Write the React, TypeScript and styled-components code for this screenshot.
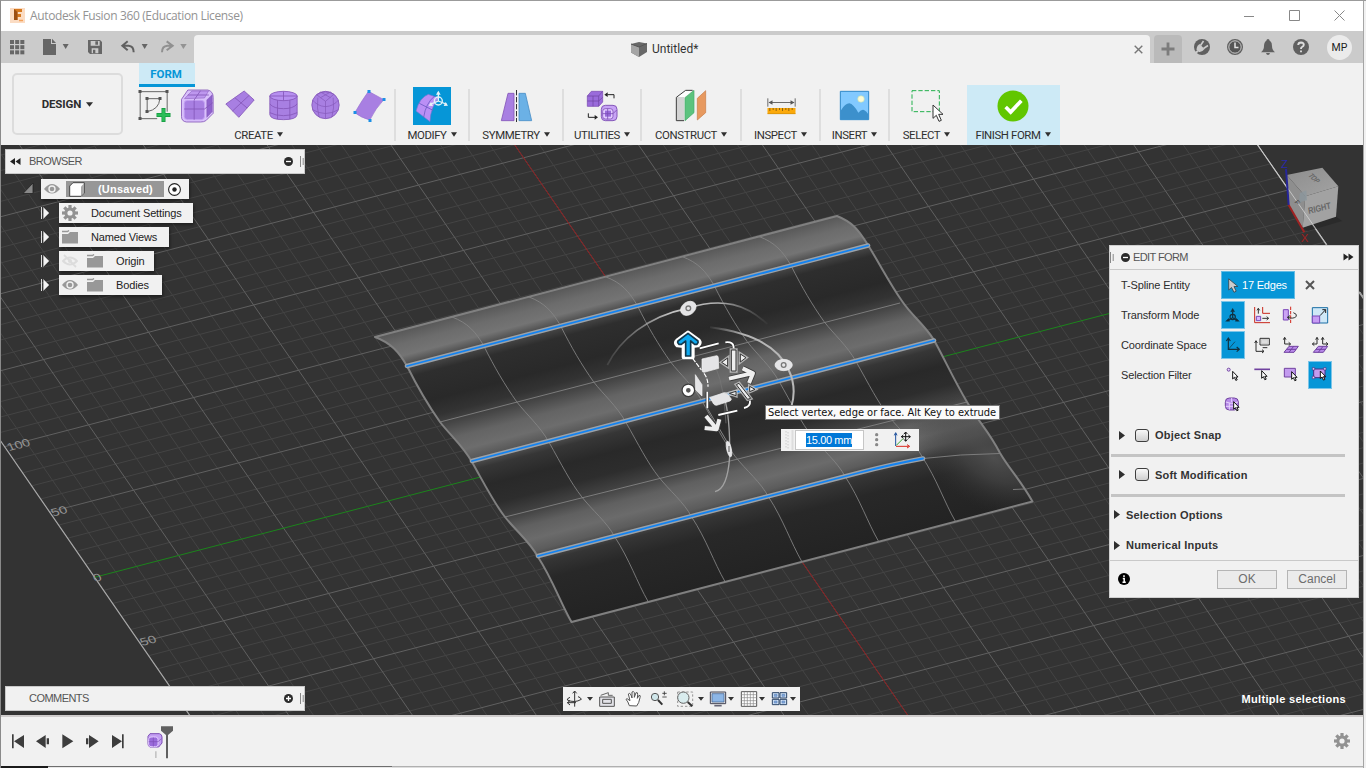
import React from "react";
import styled, { createGlobalStyle } from "styled-components";

const ui = `"Liberation Sans", Arial, sans-serif`;
const narrow = `Roboto, "Liberation Sans", sans-serif`;
const blue = "#0696d7";

const Global = createGlobalStyle`
  * { box-sizing: border-box; }
  body { margin: 0; overflow: hidden; background: #f1f1f1; font-family: ${ui}; font-size: 11px; color: #3c3c3c; }
  svg { display: block; flex: none; }
`;

/* ---------- window frame ---------- */
const Window = styled.div`
  width: 1366px; height: 768px; display: flex; flex-direction: column;
  border-top: 1px solid #9b9b9b; border-left: 1px solid #8a8a8a; background: #f1f1f1;
`;
const Frame = styled.div`
  display: flex; flex-direction: column; flex: 1; margin-right: 2px; border-right: 1px solid #a5a5a5;
`;
const TitleBar = styled.div`
  height: 30px; background: #fff; display: flex; align-items: center; padding: 0 18px 0 8px; gap: 4px;
  font: 12px "Open Sans", sans-serif; color: #939393; letter-spacing: -0.36px;
  span { flex: 1; padding-bottom: 1px; }
`;
const WindowButtons = styled.div`display: flex; gap: 34px; align-items: center; padding-bottom: 2px;`;
const TabBar = styled.div`
  height: 32px; background: #cbcbcb; display: flex; align-items: flex-end;
`;
const QuickTools = styled.div`width: 193px; height: 32px;`;
const DocumentTab = styled.div`
  width: 956px; height: 28px; background: #f1f1f1; border-radius: 4px 4px 0 0; display: flex; align-items: center;
  padding: 0 7px 0 437px; gap: 5px; font: 12px ${narrow}; color: #333; letter-spacing: 0;
  span { flex: 1; }
`;
const NewTab = styled.div`
  width: 28px; height: 28px; margin-left: 4px; background: #bababa; border-radius: 4px 4px 0 0;
  display: grid; place-items: center;
`;
const Account = styled.div`
  height: 32px; flex: 1; display: flex; align-items: center; padding-left: 11px; gap: 15px;
`;
const Avatar = styled.div`
  width: 25px; height: 25px; border-radius: 50%; background: #ebebeb; display: grid; place-items: center;
  font: 10.500px ${narrow}; color: #222; margin-left: 2px;
`;

/* ---------- ribbon ---------- */
const Ribbon = styled.div`height: 82px; display: flex; background: #f1f1f1;`;
const WorkspaceButton = styled.div`
  width: 111px; height: 62px; margin: 10px 0 0 11px; border: 2px solid #dcdcdc; border-radius: 5px;
  display: flex; align-items: center; justify-content: center; gap: 5px;
  font: 700 11.5px ${narrow}; letter-spacing: -0.1px; color: #2d2d2d;
`;
const RibbonMain = styled.div`display: flex; flex-direction: column;`;
const TabRow = styled.div`height: 24px; padding-left: 16px;`;
const FormTab = styled.div`
  width: 56px; height: 24px; background: #cdeaf6; border-bottom: 3px solid ${blue}; color: ${blue};
  font: 700 11.5px/22px ${narrow}; text-align: center; padding-right: 2px;
`;
const GroupRow = styled.div`display: flex; height: 58px;`;
const Group = styled.div<{ $w: number; $active?: boolean; $last?: boolean }>`
  width: ${(p) => p.$w}px; position: relative; display: flex; flex-direction: column; align-items: center;
  padding-right: ${(p) => (p.$last ? 4 : p.$active ? 1 : 2)}px;
  background: ${(p) => (p.$active ? "#cdeaf6" : "transparent")};
  ${(p) => p.$active && "margin-top: -2px; padding-top: 2px;"}
  &::after {
    content: ""; position: absolute; right: 0; top: 2px; width: 2px; height: 52px;
    background: ${(p) => (p.$last || p.$active ? "transparent" : "#dedede")};
  }
`;
const IconRow = styled.div<{ $shift?: number }>`
  display: flex; height: 38px; margin-left: ${(p) => p.$shift ?? 0}px;
`;
const GroupLabel = styled.div`
  display: flex; align-items: center; gap: 4px; height: 19px; font: 11.4px ${narrow};
  letter-spacing: -0.4px; color: #2f2f2f; white-space: nowrap;
`;

/* ---------- canvas ---------- */
const Viewport = styled.div`position: relative; height: 570px; background: #333; overflow: hidden;`;
const Scene = styled.svg`position: absolute; left: -1px; top: 0;`;
const DockHeader = styled.div<{ $top: number }>`
  position: absolute; left: 4px; top: ${(p) => p.$top}px; width: 300px; height: 25px; background: #f1f1f1;
  border: 1px solid #c9c9c9; display: flex; align-items: center; padding-bottom: 1px; color: #555;
  letter-spacing: -0.55px;
  span { flex: 1; }
`;
const Tree = styled.div`
  position: absolute; left: 20px; top: 34px; display: flex; flex-direction: column; gap: 4px; align-items: flex-start;
`;
const TreeRow = styled.div<{ $indent: number }>`
  display: flex; align-items: center; height: 20px; padding-left: ${(p) => p.$indent}px;
`;
const TreeItem = styled.div<{ $w: number }>`
  width: ${(p) => p.$w}px; height: 20px; background: #f1f1f1; display: flex; align-items: center;
  box-shadow: 1px 2px 3px rgba(0, 0, 0, 0.4); white-space: nowrap; letter-spacing: -0.14px; color: #222;
`;
const RootName = styled.div`
  width: 98px; height: 16px; background: #979797; color: #fff; font-weight: 700; display: flex; align-items: center;
  gap: 13px; padding-left: 3px; letter-spacing: 0.2px;
`;
const Twisty = styled.svg<{ $w: number }>`width: ${(p) => p.$w}px; height: 20px;`;

const EditPanel = styled.div`
  position: absolute; left: 1108px; top: 100px; width: 250px; height: 353px; background: #f1f1f1;
  border: 1px solid #cfcfcf; display: flex; flex-direction: column;
`;
const PanelHeader = styled.div`
  height: 24px; border-bottom: 1px solid #c9c9c9; display: flex; align-items: center; color: #555;
  padding: 0 4px 1px 0; letter-spacing: -0.6px;
  span { flex: 1; padding-left: 3px; }
`;
const OptionRow = styled.div`
  height: 30px; display: flex; align-items: center; padding-left: 11px;
`;
const OptionLabel = styled.div`width: 100px; letter-spacing: -0.14px; color: #2c2c2c; white-space: nowrap;`;
const OptionButtons = styled.div`display: flex; gap: 5px;`;
const OptionButton = styled.div<{ $on?: boolean }>`
  width: 24px; height: 28px; background: ${(p) => (p.$on ? blue : "transparent")};
  box-shadow: ${(p) => (p.$on ? "inset 0 0 0 1px #7cc5e8" : "none")};
`;
const EntityButton = styled.div`
  width: 74px; height: 28px; background: ${blue}; border: 1px solid #63bce4; color: #fff; display: flex;
  align-items: center; gap: 3px; padding-left: 6px; letter-spacing: -0.2px; white-space: nowrap;
`;
const Section = styled.div<{ $h: number; $pad: number; $lift?: number }>`
  height: ${(p) => p.$h}px; padding-left: ${(p) => p.$pad}px; padding-bottom: ${(p) => p.$lift ?? 0}px;
  display: flex; align-items: center; font-weight: 700; letter-spacing: 0.2px; color: #333;
`;
const Check = styled.div`
  width: 14px; height: 13px; border: 1px solid #3e3e3e; border-radius: 3px; margin: 0 6px 0 10px;
  background: linear-gradient(#f8f8f8, #cfcfcf);
`;
const Divider = styled.div`height: 3px; width: 234px; margin-left: 1px; background: #c4c4c4;`;
const PanelFooter = styled.div`
  flex: 1; border-top: 1px solid #c9c9c9; display: flex; align-items: center; padding: 0 11px 0 8px;
`;
const PanelButton = styled.div`
  width: 60px; height: 19px; border: 1px solid #b5b5b5; background: #ebebeb; color: #6d6d6d; display: grid;
  place-items: center; margin-left: 10px; font-size: 12px;
`;
const Tooltip = styled.div`
  position: absolute; left: 764px; top: 260px; width: 235px; height: 15px; background: #fafafa;
  border: 1px solid #777; color: #111; font: 11px/14px "DejaVu Sans Condensed", "Open Sans", sans-serif;
  padding-left: 2px; white-space: nowrap; letter-spacing: -0.02px;
`;
const ValueBox = styled.div`
  position: absolute; left: 780px; top: 284px; width: 138px; height: 22px; background: #f1f1f1; display: flex;
  align-items: center;
`;
const ValueInput = styled.div`
  width: 69px; height: 20px; margin-left: 1px; background: #fff; border: 1px solid #c6c6c6; display: grid;
  place-items: center end; padding-right: 11px;
  span { background: #0078d7; color: #fff; height: 14px; line-height: 15px; width: 46px; text-align: center;
    font-size: 11px; white-space: nowrap; letter-spacing: -0.38px; }
`;
const NavBar = styled.div`position: absolute; left: 562px; top: 542px; background: #f1f1f1;`;
const Status = styled.div`
  position: absolute; right: 17px; top: 547px; color: #fff; font-weight: 700; letter-spacing: 0.32px; line-height: 14px;
`;

/* ---------- timeline ---------- */
const Timeline = styled.div`
  height: 51px; background: #f1f1f1; border-top: 2px solid #cfcccc; display: flex; align-items: center;
  justify-content: space-between; padding: 0 13px 2px 0;
`;
const BottomEdge = styled.div`
  height: 2px; display: flex;
  i { height: 2px; background: #1b1b1b; width: 47px; }
  u { height: 2px; background: #e8e8e8; border-top: 1px solid #6e6e6e; width: 344px; }
  b { height: 2px; background: #dedede; border-top: 1px solid #b0b0b0; flex: 1; }
`;

const Down = ({ c = "#2f2f2f", w = 7 }: { c?: string; w?: number }) => (
  <svg width={w} height="5" viewBox="0 0 7 5" preserveAspectRatio="none"><path d="M0 .3h7L3.5 4.7z" fill={c} /></svg>
);

const Cell = ({ x, y, w, h, children }: { x: number; y: number; w: number; h: number; children: React.ReactNode }) => (
  <svg width={w} height={h} viewBox={`${x} ${y} ${w * 3} ${h * 3}`}>{children}</svg>
);

const Cursor = ({ x, y, s = 1, fill = "#fff" }: { x: number; y: number; s?: number; fill?: string }) => (
  <path transform={`translate(${x} ${y}) scale(${s})`} d="M0 0V27L6 21L11 32L16 30L11 20H19Z" fill={fill} stroke="#111" strokeWidth="3.500" strokeLinejoin="miter" />
);

/* ---------- 3D scene ---------- */
const O = [703.6, 419];
const U = [105, -27.3];
const V = [45, 65.3];
const pt = (a: number, b: number) => [O[0] + a * U[0] + b * V[0], O[1] + a * U[1] + b * V[1]];
const seg = (a: number[], b: number[]) => `M${a[0].toFixed(1)} ${a[1].toFixed(1)}L${b[0].toFixed(1)} ${b[1].toFixed(1)}`;

function gridPaths() {
  let minor = "";
  let major = "";
  for (let i = -29; i <= 30; i++) {
    const s = seg(pt(i / 5, -7), pt(i / 5, 8));
    if (i % 5) minor += s;
    else major += s;
  }
  for (let j = -35; j <= 40; j++) {
    const s = seg(pt(-5.8, j / 5), pt(6, j / 5));
    if (j % 5) minor += s;
    else if (j) major += s;
  }
  return { minor, major };
}

const profile =
  "M375 337C391 343 399 352 407 366C418 388 428 405 440 422C450 435 463 446 472 462C485 485 494 503 505 517C516 531 530 542 538 557C553 580 560 602 571.5 622";
const outline =
  "M375 337C391 343 399 352 407 366C418 388 428 405 440 422C450 435 463 446 472 462C485 485 494 503 505 517C516 531 530 542 538 557C553 580 560 602 571.5 622L1032.5 501.5C1019 478 1010 470 1000 453C988 430 980 424 967 402C953 378 946 362 934 340C924 324 912 316 902 301C890 284 882 268 868 245C858 229 852 222 837 216Z";

const shades: [number, string][] = [
  [421, "#585858"], [434, "#6c6c6c"], [446, "#747474"], [456, "#4c4c4c"], [468, "#2e2e2e"], [496, "#292929"],
  [512, "#333"], [524, "#484848"], [538, "#646464"], [552, "#6d6d6d"], [563, "#585858"], [574, "#363636"],
  [592, "#292929"], [612, "#2d2d2d"], [628, "#424242"], [642, "#606060"], [656, "#6b6b6b"], [668, "#5c5c5c"],
  [680, "#353535"], [698, "#282828"], [746, "#232323"],
];

function SceneView() {
  const { minor, major } = gridPaths();
  const selected = ["M407 366L868 245.5", "M472 461L934 340.5", "M538 556L860 472.5Q893 464 923 458.5"];
  return (
    <Scene width="1366" height="570" viewBox="0 145 1366 570">
      <defs>
        <linearGradient id="wave" gradientUnits="userSpaceOnUse" x1="106.5" y1="407.3" x2="188.7" y2="721.8">
          {shades.map(([d, c]) => <stop key={d} offset={(d - 421) / 325} stopColor={c} />)}
        </linearGradient>
        <radialGradient id="corner" gradientUnits="userSpaceOnUse" cx="0" cy="0" r="1" gradientTransform="translate(994 458) rotate(28) scale(90 52)">
          <stop offset="0" stopColor="#525252" stopOpacity=".9" /><stop offset=".4" stopColor="#484848" stopOpacity=".65" />
          <stop offset="1" stopColor="#303030" stopOpacity="0" />
        </radialGradient>
        <clipPath id="body"><path d={outline} /></clipPath>
        <linearGradient id="arcA" x1="0" x2="1"><stop offset="0" stopColor="#999" stopOpacity=".2" /><stop offset=".4" stopColor="#c4c4c4" /><stop offset=".7" stopColor="#b0b0b0" /><stop offset="1" stopColor="#777" stopOpacity=".1" /></linearGradient>
        <linearGradient id="arcB" x1="0" x2="1"><stop offset="0" stopColor="#999" stopOpacity=".1" /><stop offset=".4" stopColor="#b4b4b4" /><stop offset="1" stopColor="#b8b8b8" /></linearGradient>
        <linearGradient id="cubeTop" x1="0" y1="0" x2="1" y2="1"><stop offset="0" stopColor="#8d8d8d" /><stop offset="1" stopColor="#a3a3a3" /></linearGradient>
      </defs>
      <path d={minor} stroke="#444" fill="none" />
      <path d={major} stroke="#606060" fill="none" />
      <path d={seg(pt(-5.8, -7), pt(-5.8, 8)) + seg(pt(6, -7), pt(6, 8))} stroke="#a8a8a8" strokeWidth="1.200" fill="none" />
      <path d={seg(pt(0, -7), pt(0, 8))} stroke="#8e1a1c" fill="none" />
      <path d={seg(pt(-5.8, 0), pt(6, 0))} stroke="#1c841c" fill="none" />
      <g fill="#939393" fontFamily="Liberation Sans, sans-serif" fontSize="11">
        <text transform="translate(9 451) rotate(-14) skewX(12)" textLength="23" lengthAdjust="spacingAndGlyphs">100</text>
        <text transform="translate(53 516.500) rotate(-14) skewX(12)" textLength="16" lengthAdjust="spacingAndGlyphs">50</text>
        <text transform="translate(95 582) rotate(-14) skewX(12)" textLength="8" lengthAdjust="spacingAndGlyphs">0</text>
        <text transform="translate(142 646) rotate(-14) skewX(12)" textLength="16" lengthAdjust="spacingAndGlyphs">50</text>
      </g>

      <path d={outline} fill="url(#wave)" />
      <g clipPath="url(#body)">
        <rect x="880" y="380" width="160" height="140" fill="url(#corner)" />
        <g fill="none" stroke="#868686" strokeWidth="1" strokeOpacity=".85">
          {[1, 2, 3, 4, 5].map((k) => <path key={k} d={profile} transform={`translate(${k * 76.8} ${k * -20.1})`} />)}
          <path d="M440 422L900 303M505 517L967 402M923 458.5Q960 454 1000 453.5M1013 489.500L1024 489" />
        </g>
      </g>
      <path d={outline} fill="none" stroke="#808080" strokeWidth="2" strokeLinejoin="round" />
      {selected.map((d) => (
        <g key={d} fill="none" strokeLinecap="round">
          <path d={d} stroke="#9aa2aa" strokeWidth="4.600" />
          <path d={d} stroke="#1283f2" strokeWidth="1.800" />
        </g>
      ))}

      {/* transform manipulator */}
      <g transform="translate(600 290) scale(.33333)" fill="none">
        <path d="M22 225C60 150 140 80 262 55C370 20 440 45 502 102" stroke="url(#arcA)" strokeWidth="5" />
        <path d="M330 112C470 130 540 180 566 240C590 290 580 330 574 350" stroke="url(#arcB)" strokeWidth="6" />
        <path d="M372 320C388 370 390 430 389 500C385 560 370 600 345 605" stroke="#a2a2a2" strokeWidth="4" />
        <path d="M350 240Q372 290 378 400" stroke="#777" strokeWidth="2" />
        <g stroke="#2d2d2d" strokeWidth="10"><path d="M299 175L356 160M376 157Q402 154 401 175M322 305V355M355 375L412 362M432 354Q452 350 450 332" /></g>
        <g stroke="#fff" strokeWidth="5.500"><path d="M299 175L356 160M376 157Q402 154 401 175M322 305V355M355 375L412 362M432 354Q452 350 450 332" /></g>
        <path d="M278 205L304 240M312 250Q324 265 324 290" stroke="#fff" strokeWidth="3.500" strokeDasharray="14 4" />
        <path d="M322 355L384 460" stroke="#888" strokeWidth="3" />
        <g fill="#e4e4e6" stroke="#f6f6f6" strokeWidth="2">
          <ellipse cx="265" cy="55" rx="25" ry="19" transform="rotate(-35 265 55)" />
          <ellipse cx="551" cy="225" rx="26" ry="17" />
          <ellipse cx="387" cy="477" rx="7" ry="24" transform="rotate(-12 387 477)" />
          <path d="M306 207L350 197Q355 197 355 204L356 235L312 247Q306 247 306 240ZM286 254L306 284V318L287 300ZM330 323L372 308Q378 308 382 312L394 327Q394 331 390 333L350 346Q344 346 341 342Z" />
        </g>
        <g stroke="#777" strokeWidth="4"><circle cx="265" cy="55" r="7" /><circle cx="551" cy="225" r="7" /><path d="M387 468V486" /></g>
        <circle cx="265" cy="301" r="13" stroke="#3a3a3a" strokeWidth="15" /><circle cx="265" cy="301" r="12" stroke="#fff" strokeWidth="10" fill="#555" />
        <g strokeLinejoin="round">
          <path d="M387 266L452 251M428 235L459 250L447 279M318 378L346 412M358 388L350 418L314 414" stroke="#3a3a3a" strokeWidth="17" />
          <path d="M387 266L452 251M428 235L459 250L447 279M318 378L346 412M358 388L350 418L314 414" stroke="#eee" strokeWidth="12" />
        </g>
        <g fill="none" stroke="#d0d0d0" strokeWidth="10" opacity=".75">
          <path d="M394 180H408V243H394ZM383 204V229L365 217ZM421 192L438 203L421 216Z" />
          <path d="M409 284L417 280L452 325L443 328ZM408 304V317L388 310ZM449 289L465 298L449 305Z" />
        </g>
        <g fill="#eee" stroke="#333" strokeWidth="3">
          <path d="M394 180H408V243H394ZM383 204V229L365 217ZM421 192L438 203L421 216Z" />
          <path d="M409 284L417 280L452 325L443 328ZM408 304V317L388 310ZM449 289L465 298L449 305Z" />
        </g>
        <path d="M264 128L297 152Q302 158 294 166L284 167L278 160V202H251V160L244 167L232 166Q224 158 231 152Z" fill="#fff" stroke="#fff" strokeWidth="12" strokeLinejoin="round" />
        <path d="M264 130L294 153Q296 157 291 163H284L272 153V198H257V153L244 163H237Q231 158 234 153Z" fill="#0fa9ef" stroke="#12384c" strokeWidth="5" strokeLinejoin="round" />
      </g>

      {/* view cube */}
      <g transform="translate(1105 145) scale(.33333)" fontFamily="Liberation Sans, sans-serif">
        <path d="M590 248L693 215L712 228L610 258Z" fill="#222" opacity=".5" />
        <path d="M545 90L652 68L700 124L601 154Z" fill="url(#cubeTop)" />
        <path d="M545 90L601 154L593 248L552 182Z" fill="#8e8e8e" />
        <path d="M601 154L700 124L693 215L593 248Z" fill="#a2a2a2" />
        <path d="M584 145L604 136L606 166L583 172Z" fill="#8c979d" opacity=".8" />
        <path d="M458 0L665 298" stroke="#d8d8d8" strokeWidth="3" opacity=".75" />
        <path d="M551 180L543 72" stroke="#25259a" strokeWidth="6" />
        <path d="M551 180L598 262" stroke="#a02222" strokeWidth="6" />
        <text x="528" y="70" fontSize="34" fill="#2a2aa8">Z</text>
        <text x="587" y="290" fontSize="34" fill="#a02222">X</text>
        <text transform="translate(611 207) rotate(-14) skewX(-4)" fontSize="27" fontWeight="700" textLength="70" lengthAdjust="spacingAndGlyphs" fill="#676767">RIGHT</text>
        <text transform="translate(608 92) rotate(42) skewX(-20)" fontSize="22" fontWeight="700" textLength="34" lengthAdjust="spacingAndGlyphs" fill="#666">TOP</text>
        <text transform="translate(568 172) rotate(50)" fontSize="20" fontWeight="700" fill="#555">F</text>
      </g>
      <path d="M1360 292L1364 298" stroke="#aaa" />
    </Scene>
  );
}

/* ---------- small drawings ---------- */
const purple = "#a87fe2";
const edge = "#8457b8";

const Minus = ({ plus = false }: { plus?: boolean }) => (
  <svg width="9" height="9" viewBox="0 0 9 9"><circle cx="4.5" cy="4.500" r="4.500" fill="#2b2b2b" /><path d={plus ? "M2 4.500H7M4.500 2V7" : "M2 4.500H7"} stroke="#fff" strokeWidth="1.300" /></svg>
);
const Grip = () => <svg width="4" height="13" viewBox="0 0 4 13"><path d="M.5 1V12M3.200 3V10" stroke="#888" /></svg>;
const Eye = () => (
  <svg width="16" height="12" viewBox="0 0 16 12"><path d="M0 6Q8-4 16 6Q8 15 0 6Z" fill="#999" /><circle cx="8" cy="6" r="3.700" fill="#f1f1f1" /><circle cx="8" cy="6" r="2.300" fill="#999" /></svg>
);
const EyeOff = () => (
  <svg width="16" height="14" viewBox="0 0 16 14"><path d="M1 7Q8 0 15 7Q8 14 1 7ZM2 1L14 13" fill="none" stroke="#dcdcdc" strokeWidth="1.800" /><circle cx="8" cy="7" r="2" fill="#dcdcdc" /></svg>
);
const Folder = () => (
  <svg width="16" height="14" viewBox="0 0 16 14"><path d="M0 4H6L8 2H16V13.500H0Z" fill="#989898" /><path d="M0 1.500H5.500L7 .5" stroke="#989898" strokeWidth="1.500" fill="none" /></svg>
);
const Gear = ({ s = 16 }: { s?: number }) => (
  <svg width={s} height={s} viewBox="-8 -8 16 16">
    <g fill="#929292">{[0, 45, 90, 135].map((a) => <rect key={a} x="-1.600" y="-8" width="3.200" height="16" transform={`rotate(${a})`} />)}<circle r="5.600" /></g>
    <circle r="2.600" fill="#f1f1f1" />
  </svg>
);
const Expand = () => (
  <Twisty $w={14} viewBox="0 0 14 20"><path d="M2.500 4V16" stroke="#ddd" /><path d="M4.500 4.500L10 10L4.500 15.500Z" fill="#f4f4f4" stroke="#bbb" strokeWidth=".6" /></Twisty>
);
const Tri = () => <svg width="6" height="9" viewBox="0 0 6 9"><path d="M0 0L6 4.500L0 9Z" fill="#2f2f2f" /></svg>;

function QuickIcons() {
  return (
    <svg width="193" height="32" viewBox="3 93 579 96" fill="#666">
      {[0, 1, 2].map((r) => [0, 1, 2].map((c) => <rect key={`${r}${c}`} x={30 + c * 15.500} y={120 + r * 15.500} width="12" height="12" />))}
      <path d="M129 117H153V132H168V165H129ZM156 116L168 129H156ZM188 132H206L197 147Z" />
      <path d="M264 120H300L306 126V162H270L264 156Z" /><path d="M272 123H299V137H272ZM275 145H295V160H275Z" fill="#cbcbcb" /><path d="M286 124H294V134H286ZM279 149H286V160H279Z" />
      <path d="M383 124L367 137L383 151M369 137H386Q401 138 401 157" fill="none" stroke="#606060" strokeWidth="6" /><path d="M425 132H443L434 147Z" />
      <g opacity=".55"><path d="M500 124L518 137L500 151M516 137H502Q486 138 486 157" fill="none" stroke="#606060" strokeWidth="6" /><path d="M541 132H560L550 147Z" /></g>
    </svg>
  );
}

const optionIcons: React.ReactNode[][] = [
  [
    <g key="a" stroke="#12303f" strokeWidth="3.500" fill="none"><path d="M383 500V518L367 527M383 518L399 527" /><circle cx="383" cy="516" r="8" /><path d="M383 490L389 500H377ZM362 529L371 520L374 529ZM403 529L394 520L391 529Z" fill="#12303f" strokeWidth="1" /></g>,
    <g key="b" fill="none" strokeWidth="3"><path d="M449 486V533H495M473 486V505M473 505H495" stroke="#c9281d" /><path d="M460 506V490M456 496L460 490L464 496M472 520H490M485 515L491 520L485 525" stroke="#333" /><path d="M454 514H467V527H454Z" fill="#d9b6ff" stroke="#7a46b8" /></g>,
    <g key="c" fill="none" strokeWidth="3"><path d="M535 494H550V525H535Z" fill="#cba4f5" stroke="#7a46b8" /><path d="M557 485V534" stroke="#d2261c" strokeDasharray="10 3" /><path d="M565 503Q577 507 574 514Q566 523 548 517M555 512L547 517L554 523" stroke="#333" /></g>,
    <g key="d" fill="none" strokeWidth="3"><path d="M622 488H668V534H622Z" fill="#cfe8f7" stroke="#1b6fa5" /><path d="M622 513H644V534H622Z" fill="#c79cf5" stroke="#7a46b8" /><path d="M645 512L662 494M652 494H662V504" stroke="#222" /></g>,
  ],
  [
    <g key="a" fill="none" stroke="#12303f" strokeWidth="3.500"><path d="M370 580V613H402M364 588L370 579L376 588M395 606L403 613L395 620" /><path d="M371 612L390 590" strokeWidth="2" /></g>,
    <g key="b" fill="none" stroke="#2d2d2d" strokeWidth="3"><path d="M465 580H493V600H465ZM473 608H487" /><path d="M469 584H489V596H469Z" stroke="#ccc" fill="#ddd" /><path d="M453 588V619H476M449 594L453 587L457 594M471 614L477 619L471 624" /></g>,
    <g key="c" fill="none" stroke="#2d2d2d" strokeWidth="3"><path d="M539 578V597H556M535 584L539 577L543 584M551 592L557 597L551 602" /><path d="M552 604H580L567 622H537ZM545 613H573M566 604L552 622" fill="#b98aea" stroke="#70429f" /></g>,
    <g key="d" fill="none" stroke="#2d2d2d" strokeWidth="3"><path d="M636 578V597H622M632 584L636 577L640 584M628 592L622 597L628 602M653 578V597H668M649 584L653 577L657 584M663 592L669 597L663 602" /><path d="M640 604H668L655 622H625ZM633 613H661M654 604L640 622" fill="#b98aea" stroke="#70429f" /></g>,
  ],
  [
    <g key="a"><circle cx="371" cy="674" r="4.500" fill="#e9d5ff" stroke="#70429f" strokeWidth="3" /><Cursor x={383} y={679} s={0.85} /></g>,
    <g key="b"><path d="M448 673H495" stroke="#70429f" strokeWidth="5" /><Cursor x={470} y={677} s={0.85} /></g>,
    <g key="c"><path d="M538 670H571V696H538Z" fill="#c39bef" stroke="#70429f" strokeWidth="3" /><Cursor x={560} y={680} s={0.85} /></g>,
    <g key="d"><path d="M626 672H660V698H626Z" fill="#c39bef" stroke="#4b2f80" strokeWidth="3" /><path d="M622 668H629V675H622ZM656 668H663V675H656ZM622 694H629V701H622Z" fill="#e9d5ff" stroke="#4b2f80" strokeWidth="2" /><Cursor x={646} y={678} s={0.85} /></g>,
  ],
];

const RoundCube = () => (
  <g stroke={edge} strokeWidth="2.500">
    <path d="M562 270H622Q638 274 638 292V340L616 362Q610 366 600 366H558Q543 364 543 350V298Z" fill="#d9c1fb" />
    <path d="M552 296L574 273H624L612 294Z" fill="#bd97ee" strokeWidth="1.500" /><path d="M619 300L635 284V335L619 352Z" fill="#8f62cc" strokeWidth="1.500" />
    <rect x="551" y="301" width="61" height="58" rx="10" fill={purple} stroke="#c7a5f5" /><path d="M551 327H612L637 308M581 301V359M581 300L600 272M562 285H625" fill="none" />
  </g>
);

const labels = [
  { name: "MODIFY", w: 74, x: 72, y: 81, icon: (
    <g><path d="M72 81H186V195H72Z" fill={blue} /><path d="M81 153Q92 112 118 103L150 114Q125 140 123 185Z" fill="#bb8ff5" stroke="#6a78cf" strokeWidth="2" /><path d="M91 130L132 151M104 172Q110 130 137 108" stroke="#6d5cc4" strokeWidth="2.500" fill="none" />
      <g fill="none" stroke="#dff0f8" strokeWidth="4"><circle cx="148" cy="123" r="12" /><path d="M148 97V123L123 133M148 123L173 133" /></g><path d="M148 92L155 104H141ZM119 137L126 126L132 138ZM177 137L170 126L164 138Z" fill="#e7f2f7" /></g>) },
  { name: "SYMMETRY", w: 94, x: 321, y: 81, icon: (
    <g><path d="M354 100H372V182H334Z" fill={purple} stroke={edge} strokeWidth="2.500" /><path d="M387 100H406L425 182H387Z" fill="#6bb1e6" stroke="#4a8fc8" strokeWidth="2.500" /><path d="M379.500 90V186" stroke="#333" strokeWidth="3" strokeDasharray="16 5" /></g>) },
  { name: "UTILITIES", w: 78, x: 582, y: 81, icon: (
    <g><path d="M595 108L607 94H641V126L629 139H595Z" fill="#9a6bdb" stroke={edge} strokeWidth="2.500" /><path d="M595 108H629V139M629 108L641 94M612 108V139M595 123H629L641 112" stroke="#6d429f" strokeWidth="2" fill="none" />
      <rect x="637" y="136" width="47" height="46" rx="12" fill="#c7a3f5" stroke={edge} strokeWidth="3" /><rect x="641" y="146" width="31" height="31" rx="8" fill="#e2cbff" stroke={edge} strokeWidth="2.500" /><path d="M648 152H666V170H648Z" fill="#9a6bdb" /><path d="M656 146V178M641 161H672L683 150" stroke="#7d4fb5" strokeWidth="2.500" fill="none" />
      <path d="M675 115V104H655M598 160V172H618" stroke="#222" strokeWidth="3" fill="none" /><path d="M646 104L656 97V111ZM627 172L617 165V179Z" fill="#222" /></g>) },
  { name: "CONSTRUCT", w: 100, x: 849, y: 81, icon: (
    <g><path d="M863 110L890 91H912L886 112V182H863Z" fill="#fff" /><path d="M863 111H886V182H863Z" fill="#d4d4d4" /><path d="M885 182H862V112L890 91H911" stroke="#3c3c3c" strokeWidth="3" fill="none" /><path d="M888 113L915 91V158L888 182Z" fill="#5cc37e" stroke="#45ac69" strokeWidth="2" /><path d="M925 115L950 92V158L925 180Z" fill="#e7995f" stroke="#c87a44" strokeWidth="2" /></g>) },
  { name: "INSPECT", w: 79, x: 64.5, y: 81, icon: (
    <g><path d="M82 115V140M164 115V140M87 127.500H160" stroke="#6a6a6a" strokeWidth="3" /><path d="M84 127.500L96 121V134ZM162 127.500L150 121V134Z" fill="#555" /><path d="M81 144H165V162H81Z" fill="#fba90a" /><path d="M88 144V153M98 144V150M107 144V153M117 144V150M126 144V153M136 144V150M145 144V153M155 144V150" stroke="#7a560f" strokeWidth="2.500" /><path d="M81 161H165" stroke="#cf8c0c" strokeWidth="2" /></g>) },
  { name: "INSERT", w: 69, x: 288, y: 81, icon: (
    <g><path d="M301 94H386V179H301Z" fill="#82c9ff" stroke="#2f88c9" strokeWidth="3" /><circle cx="363" cy="117" r="10" fill="#fdfbd5" stroke="#b9dcb8" strokeWidth="2" /><path d="M302 152Q316 130 328 130Q340 132 355 158Q365 147 372 150Q380 154 385 163V178H302Z" fill="#3c90cc" /></g>) },
  { name: "SELECT", w: 77, x: 502, y: 81, icon: (
    <g><path d="M514 92H596V155H514Z" fill="none" stroke="#23b04d" strokeWidth="3" strokeDasharray="13 6" /><path d="M577 135V175L587 166L595 184L602 181L594 163H607Z" fill="#fff" stroke="#333" strokeWidth="3" /></g>) },
  { name: "FINISH FORM", w: 93, x: 762, y: 81, icon: (
    <g><circle cx="819" cy="138" r="46.500" fill="#61c600" /><path d="M797 141L812 156L844 122" stroke="#fff" strokeWidth="11" fill="none" /></g>) },
];

const createIcons = [
  <g key="0" fill="none" stroke="#666" strokeWidth="3"><path d="M500 335V275H419V356H470M440 296H478M440 296V335M478 296Q476 328 440 335" /><path d="M414 270H423V279H414ZM495 270H504V279H495ZM414 351H423V360H414ZM435 291H444V300H435ZM474 291H483V300H474ZM435 330H444V339H435Z" fill="#555" stroke="none" /><path d="M489 324V366M468 345H510" stroke="#149a40" strokeWidth="12" /><path d="M489 326V364M470 345H508" stroke="#2bbd58" strokeWidth="8" /></g>,
  <RoundCube key="1" />,
  <g key="2" fill={purple} stroke={edge} strokeWidth="2.500"><path d="M676 312L731 273L761 300L715 352Z" /><path d="M703 293L740 324M696 333L746 286" /></g>,
  <g key="3" fill={purple} stroke={edge} strokeWidth="2.500"><path d="M808 288V344Q810 359 849 359Q888 359 890 344V288Z" /><ellipse cx="849" cy="288" rx="41" ry="14" fill="#b68ff0" /><path d="M808 312Q820 326 849 326Q878 326 890 312M808 338Q825 347 849 347Q873 347 890 338M831 301V357M868 301V357M849 274V302M808 288H890" fill="none" /></g>,
  <g key="4" fill={purple} stroke={edge} strokeWidth="2.500"><circle cx="975" cy="315" r="41" /><path d="M975 304L1000 283M975 304L948 284M975 304V356M948 284Q975 268 1000 283M936 300Q950 318 975 320Q1000 318 1014 300M936 329Q975 352 1014 329M952 293Q948 325 956 352M998 293Q1002 325 994 352M960 276L990 293M990 276L960 293" fill="none" strokeWidth="2" /></g>,
  <g key="5"><path d="M1104 274L1150 299Q1125 325 1108 360Q1080 352 1063 338Q1085 300 1104 274Z" fill={purple} stroke="#9a72d2" strokeWidth="2" /><path d="M1101 270H1110V279H1101ZM1146 294H1155V303H1146ZM1059 333H1068V342H1059ZM1104 357H1113V366H1104Z" fill="#1b8fe6" /></g>,
];

export default function App() {
  return (
    <>
      <Global />
      <Window>
        <Frame>
          <TitleBar>
            <svg width="17" height="17" viewBox="0 0 17 17"><rect x="1" y="0" width="15" height="15" fill="#fbdcc3" /><path d="M5 1H13V4H8.500V6H12V9H8.500V12H5Z" fill="#d6791f" /><path d="M5 1L8.500 4V12H5Z" fill="#9b4e12" /><path d="M10 12.500H14" stroke="#f4a259" strokeWidth="1.500" /></svg>
            <span>Autodesk Fusion 360 (Education License)</span>
            <WindowButtons>
              <svg width="11" height="11"><path d="M0 6.500H10" stroke="#888" /></svg>
              <svg width="11" height="11"><path d="M.5 .5H10.500V10.500H.5Z" stroke="#888" fill="none" /></svg>
              <svg width="11" height="11"><path d="M.5 .5L10.500 10.500M10.500 .5L.5 10.500" stroke="#888" /></svg>
            </WindowButtons>
          </TitleBar>
          <TabBar>
            <QuickTools><QuickIcons /></QuickTools>
            <DocumentTab>
              <svg width="16" height="15" viewBox="0 0 16 15"><path d="M0 2L8 0L16 1.500V10L8 15L0 10.500Z" fill="#686868" /><path d="M0 2L8 5V15L0 10.500Z" fill="#a5a5a5" /><path d="M0 2L8 5L16 1.500" stroke="#555" fill="none" /></svg>
              <span>Untitled*</span>
              <svg width="9" height="9"><path d="M.7 .7L8.300 8.300M8.300 .7L.7 8.300" stroke="#777" strokeWidth="1.400" /></svg>
            </DocumentTab>
            <NewTab><svg width="14" height="14"><path d="M7 .5V13.500M.5 7H13.500" stroke="#7c7c7c" strokeWidth="2.800" /></svg></NewTab>
            <Account>
              <svg width="18" height="18" viewBox="0 0 18 18"><circle cx="9" cy="9" r="8" fill="#606060" /><path d="M3.500 12Q3.500 8 6.500 6L11.500 11Q9 14.500 6 14Z" fill="#cbcbcb" /><path d="M7.500 7.500L10.500 3M10.500 10.500L15 7.500" stroke="#cbcbcb" strokeWidth="1.600" /><path d="M1 16L5 13" stroke="#cbcbcb" strokeWidth="2" /></svg>
              <svg width="18" height="18" viewBox="0 0 18 18"><circle cx="9" cy="9" r="7.200" fill="#555" stroke="#606060" strokeWidth="1.600" /><circle cx="9" cy="9" r="6.200" fill="none" stroke="#cbcbcb" strokeWidth="1" /><path d="M9 4.500V9.500H12.500" stroke="#e2e2e2" strokeWidth="1.500" fill="none" /></svg>
              <svg width="18" height="18" viewBox="0 0 18 18"><path d="M9 1Q10.500 1 10.500 2.500Q13 4 13 8Q13 12 16 14.200H2Q5 12 5 8Q5 4 7.500 2.500Q7.500 1 9 1ZM7 15H11Q10.500 17 9 17Q7.500 17 7 15Z" fill="#606060" /></svg>
              <svg width="18" height="18" viewBox="0 0 18 18"><circle cx="9" cy="9" r="8" fill="#606060" /><path d="M6.200 7Q6.300 4.500 9 4.500Q11.800 4.600 11.800 6.800Q11.800 8.200 10 9Q9 9.500 9 11M9 12.500V14.300" stroke="#dedede" strokeWidth="1.900" fill="none" /></svg>
              <Avatar>MP</Avatar>
            </Account>
          </TabBar>
          <Ribbon>
            <WorkspaceButton>DESIGN <Down /></WorkspaceButton>
            <RibbonMain>
              <TabRow><FormTab>FORM</FormTab></TabRow>
              <GroupRow>
                <Group $w={273}>
                  <IconRow $shift={6}>{createIcons.map((ic, k) => <Cell key={k} x={397.5 + k * 129} y={261} w={43} h={38}>{ic}</Cell>)}</IconRow>
                  <GroupLabel>CREATE <Down w={6} /></GroupLabel>
                </Group>
                {labels.map((g, i) => (
                  <Group key={g.name} $w={g.w} $active={i === 7} $last={i === 6}>
                    <IconRow><Cell x={g.x} y={g.y} w={38} h={38}>{g.icon}</Cell></IconRow>
                    <GroupLabel>{g.name} <Down w={6} /></GroupLabel>
                  </Group>
                ))}
              </GroupRow>
            </RibbonMain>
          </Ribbon>

          <Viewport>
            <SceneView />
            <DockHeader $top={4}>
              <svg width="23" height="9" viewBox="0 0 23 9"><path d="M9 1V8L4 4.500ZM14.500 1V8L9.500 4.500Z" fill="#222" /></svg>
              <span>BROWSER</span><Minus /><svg width="7" height="1" /><Grip />
            </DockHeader>
            <Tree>
              <TreeRow $indent={0}>
                <Twisty $w={20} viewBox="0 0 20 20"><path d="M12 4V14.500H2Z" fill="#888" stroke="#222" strokeWidth=".8" /></Twisty>
                <TreeItem $w={148}>
                  <svg width="3" height="1" /><Eye /><svg width="6" height="1" />
                  <RootName><svg width="16" height="15" viewBox="0 0 16 15"><path d="M.7 4L4 .7H15.300V11L12 14.300H.7Z" fill="#fff" stroke="#444" /><path d="M12 4.500L15 1.500V11L12 14Z" fill="#aaa" /></svg>(Unsaved)</RootName>
                  <svg width="4" height="1" />
                  <svg width="13" height="13" viewBox="0 0 13 13"><circle cx="6.500" cy="6.500" r="5.900" fill="#fff" stroke="#222" strokeWidth="1.100" /><circle cx="6.500" cy="6.500" r="2.200" fill="#222" /></svg>
                </TreeItem>
              </TreeRow>
              <TreeRow $indent={18}><Expand /><svg width="6" height="1" /><TreeItem $w={134}><svg width="3" height="1" /><Gear /><svg width="13" height="1" />Document Settings</TreeItem></TreeRow>
              <TreeRow $indent={18}><Expand /><svg width="6" height="1" /><TreeItem $w={110}><svg width="3" height="1" /><Folder /><svg width="13" height="1" />Named Views</TreeItem></TreeRow>
              <TreeRow $indent={18}><Expand /><svg width="6" height="1" /><TreeItem $w={95}><svg width="3" height="1" /><EyeOff /><svg width="9" height="1" /><Folder /><svg width="13" height="1" />Origin</TreeItem></TreeRow>
              <TreeRow $indent={18}><Expand /><svg width="6" height="1" /><TreeItem $w={103}><svg width="3" height="1" /><Eye /><svg width="9" height="1" /><Folder /><svg width="13" height="1" />Bodies</TreeItem></TreeRow>
            </Tree>

            <EditPanel>
              <PanelHeader><Grip /><svg width="7" height="1" /><Minus /><span>EDIT FORM</span><svg width="11" height="8" viewBox="0 0 11 8"><path d="M.5 .5V7.500L5.500 4ZM5.500 .5V7.500L10.500 4Z" fill="#222" /></svg></PanelHeader>
              <OptionRow>
                <OptionLabel>T-Spline Entity</OptionLabel>
                <EntityButton><svg width="11" height="15" viewBox="0 0 11 15"><path d="M.7 .8V12L3.500 9.500L6 14.300L8.200 13.200L6 8.500H10Z" fill="#ccc" stroke="#3b5563" /></svg>17 Edges</EntityButton>
                <svg width="30" height="10" viewBox="0 0 30 10"><path d="M11 1L19 9M19 1L11 9" stroke="#555" strokeWidth="2" /></svg>
              </OptionRow>
              {["Transform Mode", "Coordinate Space", "Selection Filter"].map((name, r) => (
                <OptionRow key={name}>
                  <OptionLabel>{name}</OptionLabel>
                  <OptionButtons>
                    {optionIcons[r].map((ic, k) => (
                      <OptionButton key={k} $on={k === (r === 2 ? 3 : 0)}><Cell x={348 + k * 87} y={468 + r * 90} w={24} h={28}>{ic}</Cell></OptionButton>
                    ))}
                  </OptionButtons>
                </OptionRow>
              ))}
              <OptionRow>
                <OptionLabel />
                <Cell x={348} y={32} w={24} h={28}><rect x="361" y="53" width="39" height="36" rx="12" fill="#b78be8" stroke="#70429f" strokeWidth="3" /><path d="M362 65Q380 74 399 65M373 68V88M387 68V88M362 78H399M380 53V66" stroke="#e7d2ff" strokeWidth="3" fill="none" /><Cursor x={386} y={64} s={0.85} /></Cell>
              </OptionRow>
              <Section $h={34} $pad={9} $lift={4}><Tri /><Check />Object Snap</Section>
              <Divider />
              <Section $h={37} $pad={9} $lift={2}><Tri /><Check />Soft Modification</Section>
              <Divider />
              <Section $h={35} $pad={4}><Tri /><svg width="6" height="1" />Selection Options</Section>
              <Section $h={28} $pad={4} $lift={2}><Tri /><svg width="6" height="1" />Numerical Inputs</Section>
              <PanelFooter>
                <svg width="12" height="12" viewBox="0 0 12 12"><circle cx="6" cy="6" r="6" fill="#000" /><path d="M6 2.200V4M4.800 5.500H6.200V9M4.500 9.200H7.800" stroke="#fff" strokeWidth="1.500" fill="none" /></svg>
                <svg width="77" height="1" />
                <PanelButton>OK</PanelButton><PanelButton>Cancel</PanelButton>
              </PanelFooter>
            </EditPanel>

            <Tooltip>Select vertex, edge or face. Alt Key to extrude</Tooltip>
            <ValueBox>
              <svg width="13" height="22"><path d="M5 2V20M7 3V20" stroke="#ccc" strokeDasharray="1.500 1.500" /><path d="M11.500 1V21" stroke="#ddd" strokeWidth="2" /></svg>
              <ValueInput><span>15.00 mm</span></ValueInput>
              <svg width="55" height="22" viewBox="791 417 165 66"><circle cx="829" cy="434" r="5" fill="#888" /><circle cx="829" cy="449" r="5" fill="#888" /><circle cx="829" cy="464" r="5" fill="#888" /><path d="M886 468V430M882 436L886 428L890 436" stroke="#1c4f9c" strokeWidth="3" fill="none" /><path d="M887 469H925M920 464L928 469L920 474" stroke="#d92a1e" strokeWidth="3" fill="none" /><path d="M888 466L908 446" stroke="#3aa632" strokeWidth="3" /><path d="M916 427V453M903 440H930M911 432L916 426L921 432M911 448L916 454L921 448M909 435L903 440L909 445M924 435L930 440L924 445" stroke="#111" strokeWidth="3" fill="none" /></svg>
            </ValueBox>

            <NavBar>
              <svg width="237" height="24" viewBox="39 21 711 72" fill="none" strokeWidth="3" stroke="#333">
                <path d="M74 34V80M68 40L74 33L80 40M60 52Q50 56 52 60Q74 70 94 58Q92 52 84 50M52 68H78M60 62L52 68L60 75" />
                <path d="M111 51H129L120 62ZM444 51H462L453 62ZM534 51H552L543 62ZM627 51H645L636 62ZM720 51H738L729 62Z" fill="#333" stroke="none" />
                <path d="M149 51H193V79H149ZM158 58H184V70H158Z" fill="#e3e3e8" stroke="#555" /><path d="M152 46L175 38V46H188" stroke="#666" />
                <path d="M238 77Q234 64 228 58Q230 53 237 60L240 62L235 42Q239 36 243 45L246 54L246 36Q251 32 253 38V52L258 38Q264 36 263 44L262 55L267 46Q273 45 270 53Q267 70 260 78Z" fill="#fff" stroke="#555" />
                <circle cx="315" cy="51" r="11" fill="#cfe6ea" stroke="#555" /><path d="M324 60L337 74" strokeWidth="6" /><path d="M343 34V46M337 40H350M337 51H350" strokeWidth="2.500" />
                <path d="M383 36H428V79H383Z" strokeDasharray="7 6" strokeWidth="2" stroke="#666" /><circle cx="400" cy="53" r="17" fill="#d9ecee" stroke="#666" /><path d="M413 66L427 79" strokeWidth="6" />
                <path d="M481 36H527V71H481Z" fill="#ddd" stroke="#445" /><path d="M486 41H522V66H486Z" fill="#8db6e6" stroke="#3a5e92" strokeWidth="2" /><path d="M493 77H515" strokeWidth="5" stroke="#667" />
                <path d="M574 35H620V79H574Z" fill="#fff" stroke="#555" /><path d="M583 35V79M592 35V79M601 35V79M610 35V79M574 44H620M574 53H620M574 62H620M574 71H620" stroke="#888" strokeWidth="2" />
                <path d="M667 38H687V54H667ZM690 38H710V54H690ZM667 58H687V74H667ZM690 58H710V74H690Z" fill="#cfe0f5" stroke="#2d4668" /><path d="M673 43H681V49H673ZM696 43H704V49H696ZM673 63H681V69H673ZM696 63H704V69H696Z" stroke="#5e86bd" fill="#86abe0" strokeWidth="2" />
              </svg>
            </NavBar>
            <Status>Multiple selections</Status>
            <DockHeader $top={541}>
              <svg width="23" height="9" /><span>COMMENTS</span><Minus plus /><svg width="7" height="1" /><Grip />
            </DockHeader>
          </Viewport>

          <Timeline>
            <svg width="180" height="40" viewBox="3 482 540 120" fill="#3d3d3d">
              <path d="M36 522H41V564H36ZM72 524V563L42 543ZM137 524V563L108 543ZM140 534H147V552H140ZM187 522L220 543L187 564ZM258 534H265V552H258ZM267 524L296 543L267 563ZM336 524L366 543L336 563ZM366 522H371V564H366Z" />
              <path d="M450 520H478Q486 522 486 530V548L476 560H450Q444 558 444 550V528Z" fill="#c39ef3" stroke="#7d4fb5" strokeWidth="3" /><rect x="446" y="530" width="28" height="29" rx="7" fill="#9a6bdb" stroke="#e2cbff" strokeWidth="3" /><path d="M460 531V559M446 544H474L485 535" fill="none" stroke="#7d4fb5" strokeWidth="2" />
              <path d="M465 573H470V593H465Z" fill="#c4c4c4" /><path d="M483 498H519V511L504 524V594H498V524L483 511Z" fill="#606060" />
            </svg>
            <Gear />
          </Timeline>
          <BottomEdge><i /><u /><b /></BottomEdge>
        </Frame>
      </Window>
    </>
  );
}
